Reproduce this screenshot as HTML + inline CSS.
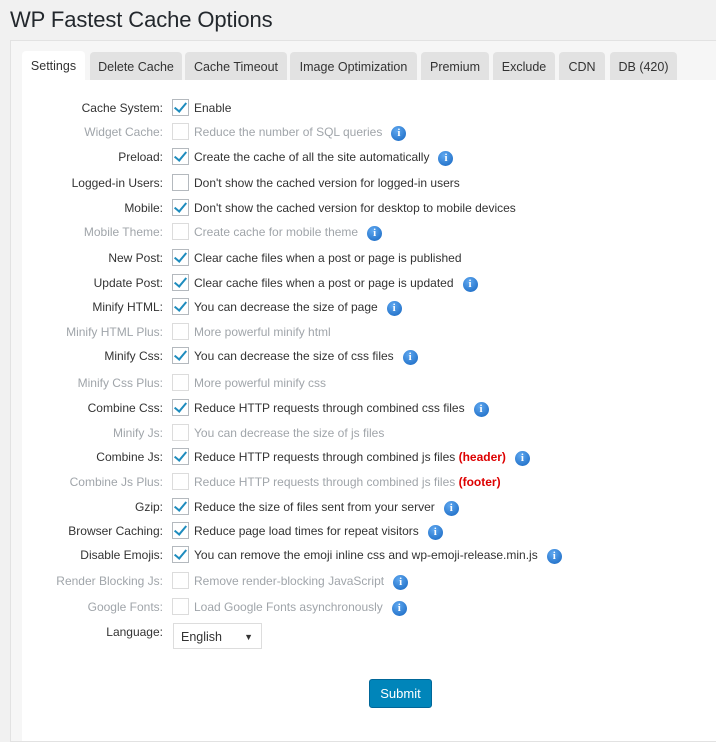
<!DOCTYPE html>
<html><head><style>
body{margin:0;background:#f1f1f1;font-family:"Liberation Sans",sans-serif;width:716px;height:725px;overflow:hidden;position:relative}
h1{position:absolute;left:10px;top:7px;margin:0;font-weight:400;font-size:22px;color:#23282d;letter-spacing:-0.1px}
.panel{position:absolute;left:10px;top:40px;width:720px;height:700px;border:1px solid #e2e2e2;background:#f6f6f6}
.tab{position:absolute;top:11px;height:28px;background:#e2e2e2;border-radius:4px 4px 0 0;font-size:12.5px;color:#333;text-align:center;line-height:30px}
.tab.act{background:#fff;top:10px;height:30px}
.content{position:absolute;left:11px;top:39px;right:0;bottom:0;background:#fff}
.row{position:absolute;left:0;height:20px;font-size:12px;line-height:20px;white-space:nowrap}
.row .lab{position:absolute;left:0;width:141px;text-align:right;color:#333}
.cb{position:absolute;left:150px;top:1px;width:15px;height:15px;border:1px solid #b4b9be;background:#fff}
.cb.on::after{content:"";position:absolute;left:4px;top:0px;width:5px;height:10px;border:solid #1e8cbe;border-width:0 2.5px 2.5px 0;transform:rotate(40deg)}
.txt{position:absolute;left:172px;color:#333}
.dis .lab,.dis .txt{color:#a0a5aa}
.dis .cb{border-color:#dcdcdc}
.i{display:inline-block;width:15px;height:15px;border-radius:50%;background:radial-gradient(circle at 40% 30%,#5fa8f0,#1565c0);color:#fff;font:bold 11px "Liberation Serif",serif;text-align:center;line-height:15px;margin-left:9px;vertical-align:0px}
.red{color:#d00;font-weight:bold}
.sel{position:absolute;left:173px;top:623px;height:26px;border:1px solid #ddd;font-size:12.5px;line-height:26px;padding-left:7px;box-sizing:border-box;width:89px;color:#333;background:#fff}
.btn{position:absolute;left:369px;top:679px;width:63px;height:29px;background:#0085ba;border:1px solid #006799;border-radius:3px;color:#fff;font-size:13px;text-align:center;line-height:27px;box-sizing:border-box}
</style></head><body>
<h1>WP Fastest Cache Options</h1>
<div class="panel">
<div class="content"></div>
<div class="tab act" style="left:11px;width:63px">Settings</div>
<div class="tab" style="left:79px;width:92px">Delete Cache</div>
<div class="tab" style="left:174px;width:102px">Cache Timeout</div>
<div class="tab" style="left:279px;width:127px">Image Optimization</div>
<div class="tab" style="left:410px;width:68px">Premium</div>
<div class="tab" style="left:482px;width:62px">Exclude</div>
<div class="tab" style="left:548px;width:46px">CDN</div>
<div class="tab" style="left:599px;width:67px">DB (420)</div>
<div class="content" style="background:none">
<div class="row" style="top:18px"><span class="lab">Cache System:</span><span class="cb on"></span><span class="txt">Enable</span></div>
<div class="row dis" style="top:42px"><span class="lab">Widget Cache:</span><span class="cb"></span><span class="txt">Reduce the number of SQL queries<span class="i">i</span></span></div>
<div class="row" style="top:67px"><span class="lab">Preload:</span><span class="cb on"></span><span class="txt">Create the cache of all the site automatically<span class="i">i</span></span></div>
<div class="row" style="top:93px"><span class="lab">Logged-in Users:</span><span class="cb"></span><span class="txt">Don't show the cached version for logged-in users</span></div>
<div class="row" style="top:118px"><span class="lab">Mobile:</span><span class="cb on"></span><span class="txt">Don't show the cached version for desktop to mobile devices</span></div>
<div class="row dis" style="top:142px"><span class="lab">Mobile Theme:</span><span class="cb"></span><span class="txt">Create cache for mobile theme<span class="i">i</span></span></div>
<div class="row" style="top:168px"><span class="lab">New Post:</span><span class="cb on"></span><span class="txt">Clear cache files when a post or page is published</span></div>
<div class="row" style="top:193px"><span class="lab">Update Post:</span><span class="cb on"></span><span class="txt">Clear cache files when a post or page is updated<span class="i">i</span></span></div>
<div class="row" style="top:217px"><span class="lab">Minify HTML:</span><span class="cb on"></span><span class="txt">You can decrease the size of page<span class="i">i</span></span></div>
<div class="row dis" style="top:242px"><span class="lab">Minify HTML Plus:</span><span class="cb"></span><span class="txt">More powerful minify html</span></div>
<div class="row" style="top:266px"><span class="lab">Minify Css:</span><span class="cb on"></span><span class="txt">You can decrease the size of css files<span class="i">i</span></span></div>
<div class="row dis" style="top:293px"><span class="lab">Minify Css Plus:</span><span class="cb"></span><span class="txt">More powerful minify css</span></div>
<div class="row" style="top:318px"><span class="lab">Combine Css:</span><span class="cb on"></span><span class="txt">Reduce HTTP requests through combined css files<span class="i">i</span></span></div>
<div class="row dis" style="top:343px"><span class="lab">Minify Js:</span><span class="cb"></span><span class="txt">You can decrease the size of js files</span></div>
<div class="row" style="top:367px"><span class="lab">Combine Js:</span><span class="cb on"></span><span class="txt">Reduce HTTP requests through combined js files <span class="red">(header)</span><span class="i">i</span></span></div>
<div class="row dis" style="top:392px"><span class="lab">Combine Js Plus:</span><span class="cb"></span><span class="txt">Reduce HTTP requests through combined js files <span class="red">(footer)</span></span></div>
<div class="row" style="top:417px"><span class="lab">Gzip:</span><span class="cb on"></span><span class="txt">Reduce the size of files sent from your server<span class="i">i</span></span></div>
<div class="row" style="top:441px"><span class="lab">Browser Caching:</span><span class="cb on"></span><span class="txt">Reduce page load times for repeat visitors<span class="i">i</span></span></div>
<div class="row" style="top:465px"><span class="lab">Disable Emojis:</span><span class="cb on"></span><span class="txt">You can remove the emoji inline css and wp-emoji-release.min.js<span class="i">i</span></span></div>
<div class="row dis" style="top:491px"><span class="lab">Render Blocking Js:</span><span class="cb"></span><span class="txt">Remove render-blocking JavaScript<span class="i">i</span></span></div>
<div class="row dis" style="top:517px"><span class="lab">Google Fonts:</span><span class="cb"></span><span class="txt">Load Google Fonts asynchronously<span class="i">i</span></span></div>
<div class="row" style="top:542px"><span class="lab">Language:</span></div>
</div>
</div>
<div class="sel">English<span style="position:absolute;right:8px;font-size:9px">▼</span></div>
<div class="btn">Submit</div>
</body></html>
